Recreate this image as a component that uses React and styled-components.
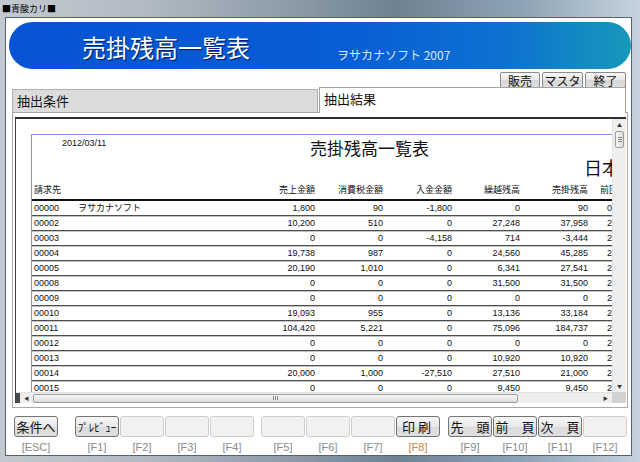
import React from "react"
import styled, { createGlobalStyle, css } from "styled-components"

const JP = `"Noto Sans CJK JP", "Liberation Sans", sans-serif`
const NUM = `"Liberation Sans", "Noto Sans CJK JP", sans-serif`

const GlobalStyle = createGlobalStyle`
  html, body {
    margin: 0;
    padding: 0;
  }
  body {
    width: 640px;
    height: 462px;
    overflow: hidden;
    font-family: ${JP};
  }
  * {
    box-sizing: border-box;
  }
`

const Window = styled.div`
  width: 640px;
  height: 462px;
  display: flex;
  flex-direction: column;
  background: linear-gradient(90deg, #c2c9d0 0%, #b2bbc4 22%, #8d9ca8 45%, #6e8292 62%, #8fa4b5 82%, #c6d3de 100%);
`

const TitleBar = styled.div`
  height: 18px;
  padding: 2px 0 0 2px;
  font-size: 9px;
  line-height: 14px;
  color: #000;
`

const Client = styled.div`
  margin: 0 9px 0 6px;
  height: 437px;
  background: #fff;
  box-shadow: 0 0 0 1px #56636e;
  display: flex;
  flex-direction: column;
`

const Banner = styled.div`
  margin: 4px 0 0 3px;
  height: 47px;
  border-radius: 24px;
  background: linear-gradient(90deg, #0653d3 0%, #085ed6 55%, #0c72d0 80%, #1898bb 100%);
  display: flex;
  align-items: center;
  padding-left: 73px;
`

const BannerTitle = styled.h1`
  margin: 3px 0 0 0;
  font-size: 24px;
  font-weight: normal;
  line-height: 30px;
  color: #fff;
  text-shadow: 1px 1px 1px #001a5e;
  white-space: nowrap;
`

const BannerSub = styled.span`
  margin: 19px 0 0 87px;
  font-size: 12px;
  line-height: 14px;
  color: #dde7fa;
  white-space: nowrap;
`

const TopButtons = styled.div`
  display: flex;
  justify-content: flex-end;
  gap: 2px;
  height: 16px;
  margin-top: 3px;
  padding-right: 5px;
`

const SmallButton = styled.button`
  width: ${({ w }) => w}px;
  height: 16px;
  padding: 0;
  border: 1px solid #8c8c8c;
  border-radius: 2px;
  background: linear-gradient(#f7f7f7, #e6e6e6 50%, #d8d8d8 51%, #dedede);
  font-family: ${JP};
  font-size: 12px;
  line-height: 13px;
  color: #111;
  white-space: nowrap;
`

const TabRow = styled.div`
  display: flex;
  height: 24px;
  margin-left: 6px;
  position: relative;
  z-index: 1;
`

const Tab = styled.div`
  width: ${({ w }) => w}px;
  padding-left: 4px;
  font-size: 13px;
  line-height: 22px;
  color: #111;
  border: 1px solid #b0b0b0;
  border-bottom: none;
  ${({ active }) =>
    active
      ? css`
          margin: -1px 0 0 1px;
          height: 26px;
          background: #fff;
          border-color: #a4a4a4;
        `
      : css`
          margin-top: 1px;
          height: 23px;
          background: #dcdcdc;
        `}
`

const Panel = styled.div`
  margin: 0 3px 0 6px;
  height: 296px;
  border: 1px solid #a8a8a8;
  padding: 4px 1px 4px 2px;
`

const Viewer = styled.div`
  height: 100%;
  display: grid;
  grid-template-columns: minmax(0, 1fr) 14px;
  grid-template-rows: minmax(0, 1fr) 11px;
  border-top: 2px solid #2e2e2e;
  border-left: 1px solid #3a3a3a;
`

const ReportArea = styled.div`
  min-width: 0;
  min-height: 0;
  overflow: hidden;
  background: #fff;
  padding: 15px 0 0 15px;
`

const Page = styled.div`
  width: 800px;
  min-height: 400px;
  border-top: 1px solid #8a8aee;
  border-left: 1px solid #8a8aee;
`

const PageHead = styled.div`
  display: grid;
  grid-template-columns: 30px 248px 1fr;
  height: 21px;
`

const PrintDate = styled.div`
  grid-column: 2;
  margin-top: 3px;
  font-family: ${NUM};
  font-size: 9px;
  line-height: 11px;
  color: #111;
`

const PageTitle = styled.div`
  grid-column: 3;
  margin-top: 2px;
  font-size: 17px;
  line-height: 22px;
  color: #111;
  white-space: nowrap;
`

const Company = styled.div`
  padding-left: 552px;
  font-size: 18px;
  line-height: 22px;
  color: #111;
  white-space: nowrap;
`

const cols = "44px 138px 99px 68px 69px 68px 68px 1fr"

const HeadRow = styled.div`
  display: grid;
  grid-template-columns: ${cols};
  align-items: end;
  height: 23px;
  padding: 0 0 3px 2px;
  border-bottom: 2px solid #111;
  font-size: 9px;
  line-height: 12px;
  color: #111;
`

const Row = styled.div`
  display: grid;
  grid-template-columns: ${cols};
  align-items: center;
  height: 15px;
  padding-left: 2px;
  border-bottom: 1px solid #4e4e4e;
  box-shadow: 0 1px 0 #c4c4c4;
  font-family: ${NUM};
  font-size: 9px;
  line-height: 13px;
  color: #111;
`

const Cell = styled.span`
  white-space: nowrap;
  text-align: ${({ right }) => (right ? "right" : "left")};
  padding-left: ${({ pl }) => pl || 0}px;
`

const VScroll = styled.div`
  display: flex;
  flex-direction: column;
  align-items: center;
  min-height: 0;
  background: #eeeeee;
  border-left: 1px solid #e2e2e2;
`

const Arrow = styled.div`
  width: ${({ w }) => w || 12}px;
  height: ${({ h }) => h || 12}px;
  display: flex;
  align-items: center;
  justify-content: center;
  font-size: 5px;
  line-height: 6px;
  color: #333;
  flex: none;
`

const VThumb = styled.div`
  width: 9px;
  height: 17px;
  border: 1px solid #9c9c9c;
  border-radius: 2px;
  background: linear-gradient(90deg, #f7f7f7, #dcdcdc);
  display: flex;
  flex-direction: column;
  justify-content: center;
  align-items: center;
  gap: 1px;
  flex: none;

  i {
    display: block;
    width: 4px;
    height: 1px;
    background: #8a8a8a;
  }
`

const Spacer = styled.div`
  flex: 1;
`

const HScroll = styled.div`
  display: flex;
  align-items: center;
  min-width: 0;
  background: #eeeeee;
  border-top: 1px solid #e2e2e2;
`

const Grip = styled.div`
  width: 4px;
  height: 100%;
  background: #4a4a4a;
  flex: none;
`

const HThumb = styled.div`
  width: 485px;
  height: 9px;
  border: 1px solid #9c9c9c;
  border-radius: 2px;
  background: linear-gradient(#f7f7f7, #dcdcdc);
  display: flex;
  justify-content: center;
  align-items: center;
  gap: 1px;
  flex: none;

  i {
    display: block;
    width: 1px;
    height: 4px;
    background: #8a8a8a;
  }
`

const Corner = styled.div`
  background: #d2d2d2;
`

const Toolbar = styled.div`
  display: flex;
  margin-top: 8px;
  padding-left: 8px;
`

const Group = styled.div`
  display: flex;
  gap: 1px;
  margin-left: ${({ gap }) => gap}px;
`

const Slot = styled.div`
  width: 44px;
  display: flex;
  flex-direction: column;
  align-items: center;
`

const FButton = styled.button`
  width: 44px;
  height: 21px;
  padding: 0;
  border-radius: 3px;
  font-family: ${JP};
  font-size: ${({ small }) => (small ? 11 : 13)}px;
  letter-spacing: ${({ spacing }) => spacing || 0}px;
  line-height: 14px;
  color: #111;
  white-space: nowrap;
  ${({ filled }) =>
    filled
      ? css`
          border: 1px solid #747474;
          background: linear-gradient(#f6f6f6, #e8e8e8 50%, #dadada 51%, #e0e0e0);
        `
      : css`
          border: 1px solid #cdcdcd;
          background: #f1f1f1;
        `}
`

const FLabel = styled.span`
  margin-top: 4px;
  font-family: ${NUM};
  font-size: 11px;
  line-height: 13px;
  color: ${({ warm }) => (warm ? "#c88552" : "#8a8a8a")};
`

const rows = [
  ["00000", "ヲサカナソフト", "1,800", "90", "-1,800", "0", "90", "0"],
  ["00002", "", "10,200", "510", "0", "27,248", "37,958", "2012/02/29"],
  ["00003", "", "0", "0", "-4,158", "714", "-3,444", "2012/02/29"],
  ["00004", "", "19,738", "987", "0", "24,560", "45,285", "2012/02/29"],
  ["00005", "", "20,190", "1,010", "0", "6,341", "27,541", "2012/02/29"],
  ["00008", "", "0", "0", "0", "31,500", "31,500", "2012/02/29"],
  ["00009", "", "0", "0", "0", "0", "0", "2012/02/29"],
  ["00010", "", "19,093", "955", "0", "13,136", "33,184", "2012/02/29"],
  ["00011", "", "104,420", "5,221", "0", "75,096", "184,737", "2012/02/29"],
  ["00012", "", "0", "0", "0", "0", "0", "2012/02/29"],
  ["00013", "", "0", "0", "0", "10,920", "10,920", "2012/02/29"],
  ["00014", "", "20,000", "1,000", "-27,510", "27,510", "21,000", "2012/02/29"],
  ["00015", "", "0", "0", "0", "9,450", "9,450", "2012/02/29"],
]

const groups = [
  { gap: 0, keys: [{ key: "ESC", text: "条件へ", filled: true }] },
  {
    gap: 17,
    keys: [
      { key: "F1", text: "ﾌﾟﾚﾋﾞｭｰ", filled: true, small: true },
      { key: "F2" },
      { key: "F3" },
      { key: "F4" },
    ],
  },
  {
    gap: 7,
    keys: [
      { key: "F5" },
      { key: "F6" },
      { key: "F7" },
      { key: "F8", text: "印刷", filled: true, spacing: 3, warm: true },
    ],
  },
  {
    gap: 8,
    keys: [
      { key: "F9", text: "先　頭", filled: true },
      { key: "F10", text: "前　頁", filled: true },
      { key: "F11", text: "次　頁", filled: true },
      { key: "F12" },
    ],
  },
]

const App = () => {
  return (
    <>
      <GlobalStyle />
      <Window>
        <TitleBar>■青酸カリ■</TitleBar>
        <Client>
          <Banner>
            <BannerTitle>売掛残高一覧表</BannerTitle>
            <BannerSub>ヲサカナソフト 2007</BannerSub>
          </Banner>
          <TopButtons>
            <SmallButton w={40}>販売</SmallButton>
            <SmallButton w={41}>マスタ</SmallButton>
            <SmallButton w={41}>終了</SmallButton>
          </TopButtons>
          <TabRow>
            <Tab w={306}>抽出条件</Tab>
            <Tab w={307} active>
              抽出結果
            </Tab>
          </TabRow>
          <Panel>
            <Viewer>
              <ReportArea>
                <Page>
                  <PageHead>
                    <PrintDate>2012/03/11</PrintDate>
                    <PageTitle>売掛残高一覧表</PageTitle>
                  </PageHead>
                  <Company>日本ヲサカナ</Company>
                  <HeadRow>
                    <Cell>請求先</Cell>
                    <Cell />
                    <Cell right>売上金額</Cell>
                    <Cell right>消費税金額</Cell>
                    <Cell right>入金金額</Cell>
                    <Cell right>繰越残高</Cell>
                    <Cell right>売掛残高</Cell>
                    <Cell pl={12}>前回請求日</Cell>
                  </HeadRow>
                  {rows.map((r) => (
                    <Row key={r[0]}>
                      <Cell>{r[0]}</Cell>
                      <Cell>{r[1]}</Cell>
                      <Cell right>{r[2]}</Cell>
                      <Cell right>{r[3]}</Cell>
                      <Cell right>{r[4]}</Cell>
                      <Cell right>{r[5]}</Cell>
                      <Cell right>{r[6]}</Cell>
                      <Cell pl={19}>{r[7]}</Cell>
                    </Row>
                  ))}
                </Page>
              </ReportArea>
              <VScroll>
                <Arrow>▲</Arrow>
                <VThumb>
                  <i />
                  <i />
                  <i />
                </VThumb>
                <Spacer />
                <Arrow>▼</Arrow>
              </VScroll>
              <HScroll>
                <Grip />
                <Arrow w={13} h={9}>◀</Arrow>
                <HThumb>
                  <i />
                  <i />
                  <i />
                </HThumb>
                <Spacer />
                <Arrow w={13} h={9}>▶</Arrow>
              </HScroll>
              <Corner />
            </Viewer>
          </Panel>
          <Toolbar>
            {groups.map((g, gi) => (
              <Group key={gi} gap={g.gap}>
                {g.keys.map((k) => (
                  <Slot key={k.key}>
                    <FButton filled={k.filled} small={k.small} spacing={k.spacing}>
                      {k.text}
                    </FButton>
                    <FLabel warm={k.warm}>[{k.key}]</FLabel>
                  </Slot>
                ))}
              </Group>
            ))}
          </Toolbar>
        </Client>
      </Window>
    </>
  )
}

export default App
